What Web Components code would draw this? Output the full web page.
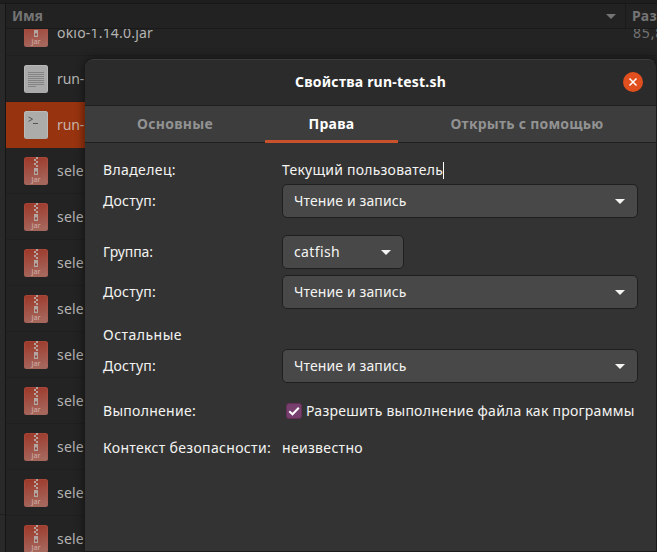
<!DOCTYPE html>
<html lang="ru">
<head>
<meta charset="utf-8">
<title>Свойства run-test.sh</title>
<style>
html,body{margin:0;height:100%;overflow:hidden;background:#232323}
body{font:14px/18px "Noto Sans","Open Sans",sans-serif;color:#f4f4f2}
</style>
</head>
<body>
<desktop-view></desktop-view>
<script>
const define = (name, html, setup) => {
  const t = document.createElement('template');
  t.innerHTML = html;
  customElements.define(name, class extends HTMLElement {
    constructor() {
      super();
      this.attachShadow({mode: 'open'}).append(t.content.cloneNode(true));
    }
    connectedCallback() { if (setup) setup(this, this.shadowRoot); }
  });
};

/* Text spaced evenly to span the width given in its "w" attribute. */
define('fit-text', `<style>:host{display:inline-block;white-space:pre;flex:none;justify-self:start}span{display:inline-block}</style><span><slot></slot></span>`, (el, root) => {
  const span = root.querySelector('span');
  requestAnimationFrame(() => {});
  const fit = () => {
    span.style.letterSpacing = '0';
    const natural = span.getBoundingClientRect().width;
    if (natural) span.style.letterSpacing = ((+el.getAttribute('w') - natural) / el.textContent.length) + 'px';
  };
  fit();
  queueMicrotask(fit);
});

define('drop-arrow', `<style>:host{display:block;flex:none;width:10px;height:5px}svg{display:block}</style>
<svg width="10" height="5"><path d="M0 0H10L5 5Z" fill="currentColor"/></svg>`);

define('jar-icon', `<style>:host{display:block;flex:none;width:24px;height:28px}svg{display:block}</style>
<svg width="24" height="28" viewBox="0 0 24 28">
<defs><linearGradient id="g" x1="0" y1="0" x2="0.2" y2="1"><stop offset="0" stop-color="#9c3626"/><stop offset="1" stop-color="#a5665c"/></linearGradient></defs>
<rect width="24" height="28" rx="2.5" fill="url(#g)"/>
<path d="M.5 25V3A2.5 2.5 0 0 1 3 .5H21A2.5 2.5 0 0 1 23.5 3V25" fill="none" stroke="#b5564a" stroke-opacity=".4"/>
<path d="M12 0h2v2h-2zM10 2h2v2h-2zM12 4h2v2h-2zM10 6h2v2h-2zM12 8h2v2h-2zM10 11h4v7h-4z" fill="#b5a5a0"/>
<rect x="11" y="14.5" width="2" height="2" fill="#8d463c"/>
<text x="12" y="24.8" text-anchor="middle" font-family="Noto Sans,sans-serif" font-size="7" font-weight="500" fill="#cdaaa4">jar</text>
</svg>`);

define('text-icon', `<style>:host{display:block;flex:none;width:24px;height:28px}svg{display:block}</style>
<svg width="24" height="28"><rect width="24" height="28" rx="2.5" fill="#aaa"/><path d="M.5 26V3A2.5 2.5 0 0 1 3 .5H21A2.5 2.5 0 0 1 23.5 3V26" fill="none" stroke="#b8b8b8"/>
<path d="M4 7.5H20M4 9.5H20M4 11.5H20M4 13.5H20M4 15.5H20M4 17.5H20M4 19.5H20M4 21.5H12" stroke="#808080" stroke-width=".9"/></svg>`);

define('script-icon', `<style>:host{display:block;flex:none;width:24px;height:28px}svg{display:block}</style>
<svg width="24" height="28"><rect width="24" height="28" rx="2.5" fill="#acacaa"/><path d="M.5 26V3A2.5 2.5 0 0 1 3 .5H21A2.5 2.5 0 0 1 23.5 3V26" fill="none" stroke="#bababa"/>
<path d="M4.5 6L8.5 8.2L4.5 10.4M9 12.5H14" fill="none" stroke="#555" stroke-width="1"/></svg>`);

define('file-row', `<style>
:host{display:flex;align-items:center;height:45px;padding-left:18px;gap:9px;border-bottom:1px solid #1f1f1f;color:#b4b4b2;flex:none}
:host([selected]){background:#98330f;border-bottom-color:#98330f;color:#c8b4ab}
slot[name=size]::slotted(*){margin-left:auto;margin-right:-7px;color:#737373}
</style><slot name="icon"></slot><slot></slot><slot name="size"></slot>`);

define('file-list', `<style>
:host{display:grid;grid-template-columns:5px 1px 1fr;grid-template-rows:3px 1px 24px 1px 1fr;height:552px;box-sizing:border-box;background:#232323}
.top{grid-column:1/-1;background:#1e1e1e}.edge{grid-column:1/-1;background:#171717}
.side{grid-row:3/-1;grid-column:1;background:linear-gradient(#292929 510px,#1e1e1e 510px 511px,#292929 511px)}
.line{grid-row:3/-1;grid-column:2;background:#151515}
header{grid-column:3;grid-row:3;display:flex;align-items:center;background:#222;color:#747474;font-weight:bold;padding-left:6px}
drop-arrow{margin-left:auto;margin-right:9px}
.sep{height:100%;border-left:1px solid #1a1a1a;width:32px;flex:none;padding-left:6px;box-sizing:border-box;display:flex;align-items:center}
.rule{grid-column:3;grid-row:4;background:#1a1a1a}
main{grid-column:3;grid-row:5;display:flex;flex-direction:column;overflow:hidden;min-height:0}
.rows{margin-top:-19px}
</style>
<div class="top"></div><div class="edge"></div><div class="side"></div><div class="line"></div>
<header><fit-text w="31">Имя</fit-text><drop-arrow></drop-arrow><div class="sep"><fit-text w="25">Раз</fit-text></div></header>
<div class="rule"></div>
<main><div class="rows">
<file-row><jar-icon slot="icon"></jar-icon><fit-text w="96">okio-1.14.0.jar</fit-text><fit-text slot="size" w="31">85,8</fit-text></file-row>
<file-row><text-icon slot="icon"></text-icon><fit-text w="27">run-</fit-text></file-row>
<file-row selected><script-icon slot="icon"></script-icon><fit-text w="27">run-</fit-text></file-row>
</div></main>`, (el, root) => {
  const rows = root.querySelector('.rows');
  if (rows.children.length > 3) return;
  for (let i = 0; i < 9; i++) {
    const r = document.createElement('file-row');
    r.innerHTML = '<jar-icon slot="icon"></jar-icon><fit-text w="27">sele</fit-text>';
    rows.append(r);
  }
});

define('combo-box', `<style>
:host{display:flex;align-items:center;justify-content:space-between;box-sizing:border-box;height:34px;width:356px;padding:0 12px 0 11px;border:1px solid #1f1f1f;border-radius:5px;background:#484848}
:host([small]){width:122px}
</style><slot></slot><drop-arrow></drop-arrow>`);

define('check-box', `<style>
:host{display:flex;align-items:center;gap:4px;padding-left:4px}
svg{display:block;flex:none}
</style><svg width="16" height="16"><rect x=".5" y=".5" width="15" height="15" rx="2.5" fill="#763f6e" stroke="#643059"/><path d="M3.3 8.2L6.5 11.3L12.8 4.8" fill="none" stroke="#fff" stroke-width="2"/></svg><slot></slot>`);

define('form-row', `<style>
:host{display:grid;grid-template-columns:179px 1fr;align-items:center;min-height:18px}
</style><slot name="label"></slot><slot></slot>`);

define('tab-item', `<style>
:host{display:flex;align-items:center;justify-content:center;color:#929292;font-weight:bold;box-sizing:border-box;border-bottom:1px solid #1f1f1f}
:host([active]){color:#fff;border-bottom:3px solid #c9512b;padding-top:2px}
</style><slot></slot>`);

define('close-button', `<style>:host{display:block;width:20px;height:20px}svg{display:block}</style>
<svg width="20" height="20"><circle cx="10" cy="10" r="10" fill="#e04f1d"/><path d="M6.5 6.5L13.5 13.5M13.5 6.5L6.5 13.5" stroke="#fff" stroke-width="1.5"/></svg>`);

define('properties-dialog', `<style>
:host{display:flex;flex-direction:column;box-sizing:border-box;width:572px;height:493px;background:#333;border:1px solid #1b1b1b;border-top-color:#3c3c3c;border-left:0;border-radius:9px 9px 0 0;overflow:hidden;box-shadow:0 0 10px 1px rgba(0,0,0,.48)}
header{display:grid;grid-template-columns:1fr auto 1fr;align-items:center;height:45px;background:#2b2b2b;border-bottom:1px solid #1f1f1f;font-weight:bold;color:#fff;flex:none}
header fit-text{grid-column:2;margin-bottom:2px}
close-button{justify-self:end;margin-right:13px;margin-bottom:1px}
nav{display:grid;grid-template-columns:180px 133px 1fr;height:37px;background:#3d3d3d;flex:none}
main{padding:18px 18px 0 18px}
form-row{margin-bottom:6px}
.tight{margin-bottom:5px}.wide{margin-bottom:17px}
.value{display:flex;align-items:center}
.caret{width:1px;height:17px;background:#fff}
.ex{margin-bottom:19px}.last{margin-bottom:19px}
</style>
<header><fit-text w="151">Свойства run-test.sh</fit-text><close-button></close-button></header>
<nav><tab-item><fit-text w="76">Основные</fit-text></tab-item><tab-item active><fit-text w="46">Права</fit-text></tab-item><tab-item><fit-text w="153">Открыть с помощью</fit-text></tab-item></nav>
<main>
<form-row class="tight"><fit-text slot="label" w="73">Владелец:</fit-text><div class="value"><fit-text w="161">Текущий пользователь</fit-text><span class="caret"></span></div></form-row>
<form-row class="wide"><fit-text slot="label" w="53">Доступ:</fit-text><combo-box><fit-text w="112.5">Чтение и запись</fit-text></combo-box></form-row>
<form-row><fit-text slot="label" w="50">Группа:</fit-text><combo-box small><fit-text w="46">catfish</fit-text></combo-box></form-row>
<form-row class="wide"><fit-text slot="label" w="53">Доступ:</fit-text><combo-box><fit-text w="112.5">Чтение и запись</fit-text></combo-box></form-row>
<form-row class="tight"><fit-text slot="label" w="79">Остальные</fit-text></form-row>
<form-row class="ex"><fit-text slot="label" w="53">Доступ:</fit-text><combo-box><fit-text w="112.5">Чтение и запись</fit-text></combo-box></form-row>
<form-row class="last"><fit-text slot="label" w="93">Выполнение:</fit-text><check-box><fit-text w="328.5">Разрешить выполнение файла как программы</fit-text></check-box></form-row>
<form-row><fit-text slot="label" w="168">Контекст безопасности:</fit-text><fit-text w="81">неизвестно</fit-text></form-row>
</main>`);

define('desktop-view', `<style>
:host{display:block;position:relative;width:657px;height:552px;overflow:hidden}
properties-dialog{position:absolute;left:85px;top:59px}
</style><file-list></file-list><properties-dialog></properties-dialog>`);
</script>
</body>
</html>
